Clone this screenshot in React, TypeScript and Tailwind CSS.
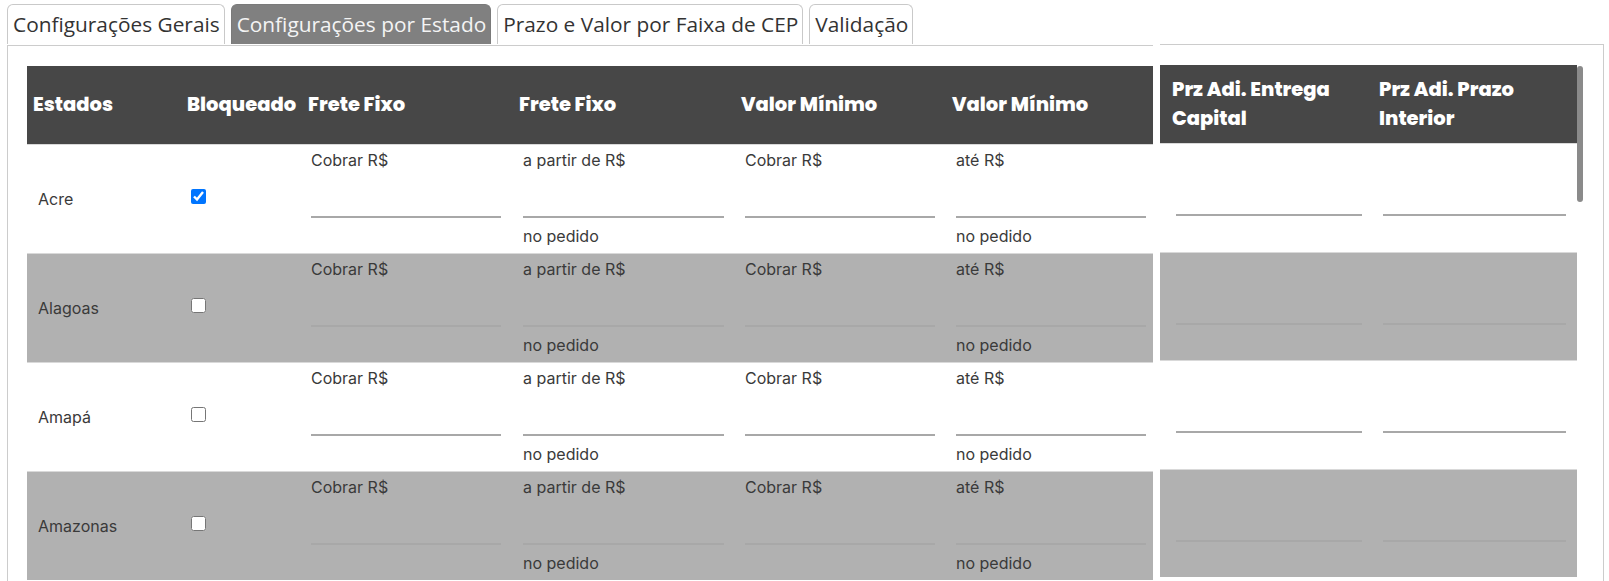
import React from "react";

type Estado = { nome: string; bloqueado: boolean };

const estados: Estado[] = [
  { nome: "Acre", bloqueado: true },
  { nome: "Alagoas", bloqueado: false },
  { nome: "Amapá", bloqueado: false },
  { nome: "Amazonas", bloqueado: false },
];

const tabs = [
  { label: "Configurações Gerais", active: false },
  { label: "Configurações por Estado", active: true },
  { label: "Prazo e Valor por Faixa de CEP", active: false },
  { label: "Validação", active: false },
];

// colunas da tabela principal
const colunas = [
  { titulo: "Estados", w: "w-[154px]" },
  { titulo: "Bloqueado", w: "w-[121px]" },
  { titulo: "Frete Fixo", w: "w-[211px]" },
  { titulo: "Frete Fixo", w: "w-[222px]" },
  { titulo: "Valor Mínimo", w: "w-[211px]" },
  { titulo: "Valor Mínimo", w: "w-[205px]" },
];

const headFont = "font-['Poppins','Inter',sans-serif]";
const bodyFont = "font-['Inter','Noto_Sans',sans-serif]";

function Campo({
  label,
  sufixo,
  className,
}: {
  label: string;
  sufixo?: string;
  className: string;
}) {
  return (
    <div className={`${className} flex flex-col pt-[5px]`}>
      <span className="leading-[21px]">{label}</span>
      <input
        type="text"
        className="h-[47px] w-full bg-transparent border-0 border-b-2 border-[#a8a8a8] outline-none"
      />
      {sufixo && <span className="mt-[8px] leading-[21px]">{sufixo}</span>}
    </div>
  );
}

export default function App() {
  return (
    <div className="w-[1609px] h-[581px] overflow-hidden bg-white">
      {/* abas */}
      <div className="flex gap-[6px] pl-[7px] pt-[4px] font-['Open_Sans',sans-serif] text-[20.85px]">
        {tabs.map((t) => (
          <div
            key={t.label}
            className={`h-[40px] flex items-center pl-[5px] pr-[4px] rounded-t-[6px] border border-b-0 whitespace-nowrap ${
              t.active
                ? "bg-[#808080] border-[#7a7a7a] text-[#f4f4f4]"
                : "bg-white border-[#c9c9c9] text-[#333]"
            }`}
          >
            {t.label}
          </div>
        ))}
      </div>

      <div className="flex items-start">
        {/* tabela principal */}
        <div className="ml-[7px] mt-px w-[1146px] border-l border-t border-[#cccccc] pl-[19px] pt-[20px] h-[600px]">
          <div className={`flex h-[78px] bg-[#474747] text-white ${headFont} font-extrabold text-[19.5px]`}>
            {colunas.map((c, i) => (
              <div key={i} className={`${c.w} flex items-center pl-[6px] whitespace-nowrap`}>
                {c.titulo}
              </div>
            ))}
          </div>
          {estados.map((e, idx) => (
            <div
              key={e.nome}
              className={`flex h-[109px] border-t border-[#d9d9d9] text-[16px] text-[#3a3a3a] ${bodyFont} ${
                idx % 2 === 1 ? "bg-[#b1b1b1]" : "bg-white"
              }`}
            >
              <div className="w-[154px] flex items-center pl-[11px]">{e.nome}</div>
              <div className="w-[121px] flex items-center pl-[10px] pb-[6px]">
                <input type="checkbox" checked={e.bloqueado} readOnly className="w-[15px] h-[15px]" />
              </div>
              <Campo label="Cobrar R$" className="w-[211px] pl-[9px] pr-[12px]" />
              <Campo label="a partir de R$" sufixo="no pedido" className="w-[222px] pl-[10px] pr-[11px]" />
              <Campo label="Cobrar R$" className="w-[211px] pl-[10px] pr-[11px]" />
              <Campo label="até R$" sufixo="no pedido" className="w-[205px] pl-[10px] pr-[5px]" />
            </div>
          ))}
        </div>

        {/* prazos adicionais */}
        <div className="ml-[7px] w-[444px] border-t border-r border-[#cccccc] pt-[20px] pr-[20px] flex h-[600px]">
          <div className="w-[417px]">
            <div className={`flex h-[78px] bg-[#474747] text-white ${headFont} font-extrabold text-[19.5px] leading-[29px]`}>
              <div className="w-[209px] flex items-center pl-[12px]">
                Prz Adi. Entrega
                <br />
                Capital
              </div>
              <div className="w-[208px] flex items-center pl-[10px]">
                Prz Adi. Prazo
                <br />
                Interior
              </div>
            </div>
            {estados.map((e, idx) => (
              <div
                key={e.nome}
                className={`flex h-[108.5px] border-t border-[#d9d9d9] ${idx % 2 === 1 ? "bg-[#b1b1b1]" : "bg-white"}`}
              >
                <div className="w-[209px] pl-[16px] pr-[7px] pt-[26px]">
                  <input type="text" className="h-[46px] w-full bg-transparent border-0 border-b-2 border-[#a8a8a8] outline-none" />
                </div>
                <div className="w-[208px] pl-[14px] pr-[11px] pt-[26px]">
                  <input type="text" className="h-[46px] w-full bg-transparent border-0 border-b-2 border-[#a8a8a8] outline-none" />
                </div>
              </div>
            ))}
          </div>
          {/* barra de rolagem */}
          <div className="w-[6px] pt-px">
            <div className="h-[136px] w-[6px] rounded-full bg-[#8a8a8a]" />
          </div>
        </div>
      </div>
    </div>
  );
}
